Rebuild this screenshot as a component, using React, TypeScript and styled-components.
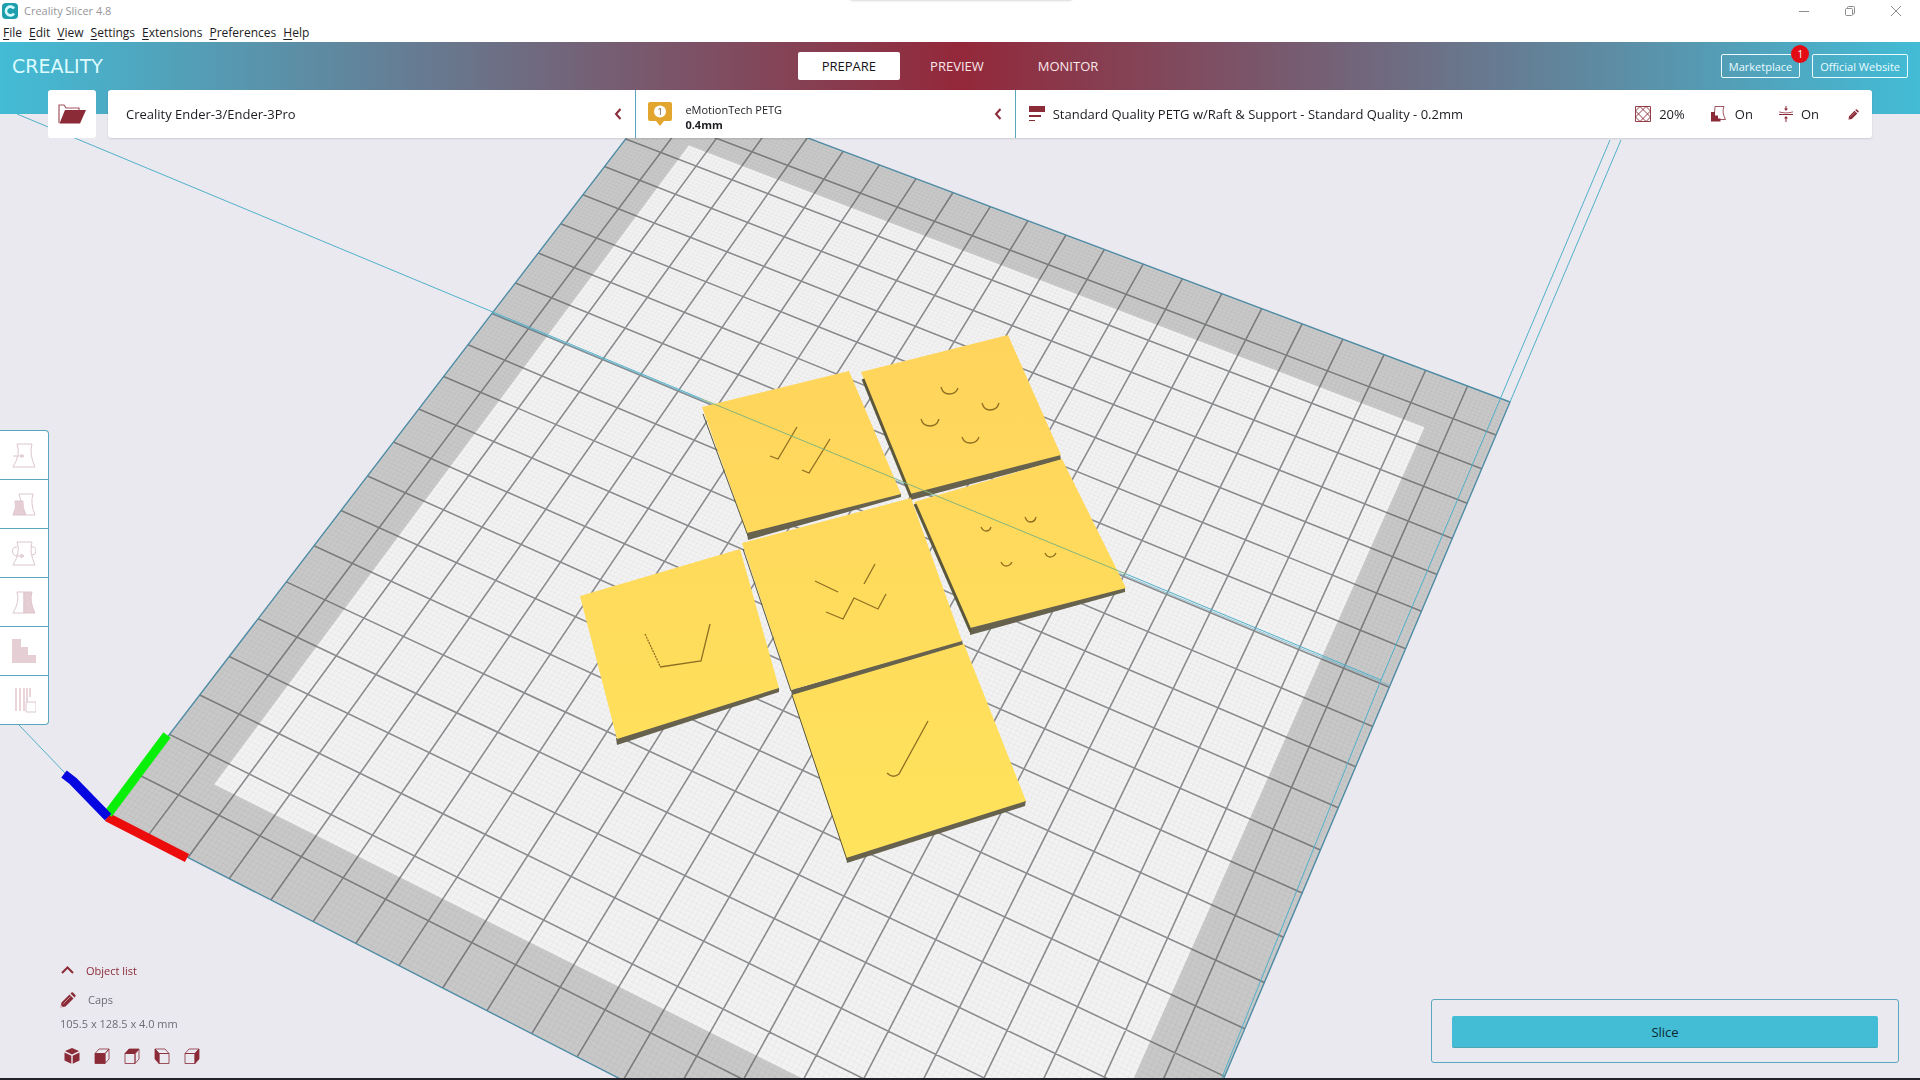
import React from "react";
import styled, { createGlobalStyle, css } from "styled-components";

const color = {
  accent: "#43bcd6",
  line: "#5aa6be",
  wine: "#8a2b37",
  text: "#1c1c22",
  muted: "#6c6c74",
  canvas: "#eae9f0",
  panel: "#ffffff",
};

const GlobalStyle = createGlobalStyle`
  *, *::before, *::after { box-sizing: border-box; }
  html, body { margin: 0; padding: 0; }
  body {
    font-family: "Open Sans", "Noto Sans", sans-serif;
    font-size: 13px;
    line-height: 16px;
    color: ${color.text};
    background: ${color.canvas};
  }
  button { font: inherit; color: inherit; margin: 0; padding: 0; border: 0; background: none; cursor: pointer; }
  svg { display: block; flex: none; }
`;

const Shell = styled.div`
  min-height: 100vh;
  display: flex;
  flex-direction: column;
  border-bottom: 2px solid #23222b;
`;

/* ---------- window chrome ---------- */

const WindowBar = styled.header`
  position: relative;
  height: 42px;
  background: #fff;
`;

const TitleRow = styled.div`
  display: flex;
  align-items: center;
  height: 22px;
  padding: 0 18px 0 2px;
  gap: 6px;
  font-size: 11px;
  color: #96969a;
`;

const Title = styled.span`
  flex: 1;
`;

const WindowControls = styled.div`
  display: flex;
  gap: 34px;
  color: #8d8d8d;
  button { width: 12px; height: 12px; }
`;

const TopGlow = styled.div`
  position: absolute;
  top: -4px;
  left: 50%;
  width: 222px;
  height: 4px;
  margin-left: -110px;
  border-radius: 4px;
  box-shadow: 0 0 3px rgba(0, 0, 0, 0.3);
`;

const MenuRow = styled.nav`
  display: flex;
  align-items: center;
  height: 20px;
  padding: 2px 3px 0;
  gap: 7px;
  font-size: 12px;
  line-height: 18px;
  u { text-underline-offset: 2px; }
`;

/* ---------- stage header ---------- */

const Stage = styled.header`
  display: grid;
  grid-template-columns: 1fr auto 1fr;
  align-items: start;
  height: 72px;
  padding: 10px 12px 0;
  background: linear-gradient(90deg, ${color.accent} 0%, #93283a 50%, ${color.accent} 100%);
`;

const Logo = styled.div`
  font-family: "DejaVu Sans", sans-serif;
  font-size: 19px;
  line-height: 28px;
  color: #dcfbff;
`;

const Tabs = styled.nav`
  display: flex;
  gap: 6px;
`;

const Tab = styled.button<{ $active?: boolean }>`
  height: 28px;
  padding: 0 24px;
  border-radius: 2px;
  font-size: 13px;
  color: #fbe6ea;
  ${(p) => p.$active && css`background: #fff; color: #14141c;`}
`;

const HeaderLinks = styled.div`
  display: flex;
  justify-content: flex-end;
  gap: 12px;
  padding-top: 2px;
`;

const HeaderLink = styled.a`
  position: relative;
  height: 24px;
  padding: 0 7px;
  border: 1px solid #e9fbff;
  border-radius: 2px;
  font-size: 11px;
  line-height: 24px;
  color: #e9fbff;
  text-decoration: none;
`;

const Badge = styled.span`
  position: absolute;
  top: -10px;
  right: -10px;
  width: 18px;
  height: 18px;
  border-radius: 50%;
  background: #e30c14;
  font-size: 10px;
  line-height: 18px;
  text-align: center;
`;

/* ---------- workspace ---------- */

const Workspace = styled.main`
  position: relative;
  flex: 1;
  display: flex;
  flex-direction: column;
`;

const Backdrop = styled.div`
  position: fixed;
  inset: 0;
  z-index: -1;
  svg { width: 100%; height: 100%; }
`;

const PanelRow = styled.div`
  display: flex;
  gap: 12px;
  margin: -24px 48px 0;
`;

const OpenButton = styled.button`
  display: grid;
  place-items: center;
  width: 48px;
  height: 48px;
  border-radius: 3px;
  background: ${color.panel};
`;

const Panel = styled.div`
  flex: 1;
  display: grid;
  grid-template-columns: 299fr 215fr 486fr;
  height: 48px;
  border-radius: 3px;
  background: ${color.panel};
  box-shadow: 0 1px 2px rgba(0, 0, 0, 0.12);
`;

const Section = styled.button<{ $indent: number }>`
  display: flex;
  align-items: center;
  min-width: 0;
  padding: 0 13px 0 ${(p) => p.$indent}px;
  text-align: left;
  white-space: nowrap;
  & + & { border-left: 1px solid ${color.line}; }
`;

const Grow = styled.span`
  flex: 1;
`;

const Material = styled.span`
  flex: 1;
  display: flex;
  flex-direction: column;
  padding: 6px 0 0 13px;
  font-size: 11px;
  line-height: 15px;
`;

const Profile = styled.span`
  flex: 1;
  padding-left: 8px;
`;

const Setting = styled.span<{ $after: number }>`
  display: flex;
  align-items: center;
  gap: 8px;
  margin-right: ${(p) => p.$after}px;
`;

const Tools = styled.div`
  align-self: flex-start;
  display: flex;
  flex-direction: column;
  margin-top: 292px;
  border: 1px solid ${color.line};
  border-left: 0;
  border-radius: 0 4px 4px 0;
  background: ${color.panel};
`;

const Tool = styled.button`
  display: grid;
  place-items: center;
  width: 48px;
  height: 49px;
  & + & { border-top: 1px solid ${color.line}; }
  &:first-child { height: 48px; }
`;

const Footer = styled.div`
  display: flex;
  justify-content: space-between;
  align-items: flex-end;
  margin-top: auto;
  padding: 0 21px 14px 60px;
`;

const ObjectInfo = styled.section`
  display: flex;
  flex-direction: column;
  align-items: flex-start;
  font-size: 11px;
  color: ${color.muted};
`;

const InfoButton = styled.button<{ $strong?: boolean }>`
  display: flex;
  align-items: center;
  height: 29px;
  gap: ${(p) => (p.$strong ? 11 : 12)}px;
  color: ${(p) => (p.$strong ? color.wine : color.muted)};
`;

const Dimensions = styled.p`
  margin: 0;
  line-height: 20px;
`;

const Views = styled.div`
  display: flex;
  gap: 14px;
  padding: 14px 0 0 4px;
`;

const SliceBox = styled.section`
  width: 468px;
  margin-bottom: 1px;
  padding: 16px 20px 14px;
  border: 1px solid ${color.line};
  border-radius: 3px;
`;

const SliceButton = styled.button`
  display: block;
  width: 100%;
  height: 32px;
  border-radius: 2px;
  border-bottom: 1px solid #4fa5b2;
  background: ${color.accent};
  color: #0d2833;
`;

/* ---------- build plate scene ---------- */

type Point = [number, number];

const CELLS = 22;
const INSET = 1.5;
// Plate corners on the canvas: front left, front right, back right, back left.
const plate: Point[] = [[107, 816], [1116, 1333], [1510, 402], [667, 85]];

const project = (() => {
  const [[x0, y0], [x1, y1], [x2, y2], [x3, y3]] = plate;
  const dx1 = x1 - x2, dx2 = x3 - x2, sx = x0 - x1 + x2 - x3;
  const dy1 = y1 - y2, dy2 = y3 - y2, sy = y0 - y1 + y2 - y3;
  const den = dx1 * dy2 - dx2 * dy1;
  const g = (sx * dy2 - dx2 * sy) / den;
  const h = (dx1 * sy - sx * dy1) / den;
  return (col: number, row: number): Point => {
    const u = col / CELLS, v = row / CELLS;
    const w = g * u + h * v + 1;
    return [
      ((x1 - x0 + g * x1) * u + (x3 - x0 + h * x3) * v + x0) / w,
      ((y1 - y0 + g * y1) * u + (y3 - y0 + h * y3) * v + y0) / w,
    ];
  };
})();

const at = (c: number, r: number) => project(c, r).map((n) => n.toFixed(2)).join(" ");

const gridPath = (step: number, skipMajor: boolean) => {
  const parts: string[] = [];
  const count = Math.round(CELLS / step);
  for (let i = 1; i < count; i++) {
    const k = i * step;
    if (skipMajor && i % 10 === 0) continue;
    parts.push(`M${at(k, 0)}L${at(k, CELLS)}M${at(0, k)}L${at(CELLS, k)}`);
  }
  return parts.join("");
};

const square = (a: number, b: number) => `M${at(a, a)}L${at(b, a)}L${at(b, b)}L${at(a, b)}Z`;

const outline = square(0, CELLS);
const printable = square(INSET, CELLS - INSET);
const major = gridPath(1, false);
const minor = gridPath(0.1, true);

// Each tile: top face, front side, and the width of its visible left side.
const tiles = [
  { top: "702,407 849,371 901,494 747,533", side: "747,532 901,493 901,497 748,540", left: "M703 414 L748 536", w: 1 },
  { top: "861,372 1008,335 1061,455 910,494", side: "910,493 1060,454 1061,460 911,500", left: "M863 379 L911 497", w: 3 },
  { top: "914,502 1062,459 1126,588 970,628", side: "970,627 1125,586 1125,592 970,635", left: "M915 504 L971 632", w: 3 },
  { top: "742,543 911,498 962,641 791,690", side: "791,690 962,640 963,645 792,696", left: "M743 549 L791 691", w: 1 },
  { top: "580,596 740,549 779,688 617,739", side: "616,738 779,687 779,692 617,745", left: "", w: 0 },
  { top: "792,695 964,644 1026,801 846,858", side: "846,857 1026,800 1025,806 847,863", left: "M792 695 L847 860", w: 1 },
];

const marks = [
  "M797 427 L778 459 L770 456",
  "M830 439 L809 473 L802 470",
  "M941 387 q2 7 8 7 q7 0 9 -6",
  "M982 403 q2 7 8 7 q7 0 9 -7",
  "M921 419 q2 7 9 7 q7 0 9 -7",
  "M962 437 q2 6 8 6 q7 0 9 -6",
  "M981 527 q2 4 5 4 q4 0 5 -4",
  "M1025 517 q2 5 5 5 q5 0 6 -5",
  "M1001 562 q2 4 5 4 q4 0 6 -4",
  "M1045 553 q2 4 5 4 q4 0 6 -4",
  "M815 581 L838 592",
  "M875 564 L864 584",
  "M826 612 L843 619 L854 598 L878 609 L886 594",
  "M660 667 L701 661 L710 624",
  "M928 721 L899 774 Q893 779 887 773",
];

const Scene = () => (
  <svg viewBox="0 0 1920 1080" preserveAspectRatio="xMidYMid slice" role="img" aria-label="Build plate with six tiles">
    <defs>
      <linearGradient id="tile" gradientUnits="userSpaceOnUse" x1="0" y1="335" x2="0" y2="860">
        <stop offset="0" stopColor="#ffd45c" />
        <stop offset="1" stopColor="#ffe35c" />
      </linearGradient>
    </defs>
    <rect width="1920" height="1080" fill={color.canvas} />
    <path d={outline} fill="#c8c8c8" />
    <path d={printable} fill="#f2f2f3" />
    <path d={minor} stroke="#000" strokeOpacity="0.03" fill="none" />
    <path d={major} stroke="#4c4d50" strokeOpacity="0.62" strokeWidth="1.6" fill="none" />
    <path d={outline} stroke="#4f8ca4" strokeWidth="1.4" fill="none" />
    <path d="M492 313 L1389 685" stroke="#52aac4" strokeOpacity="0.6" fill="none" />
    {tiles.map((t) => (
      <g key={t.top}>
        <polygon points={t.side} fill="#66624e" />
        <polygon points={t.top} fill="url(#tile)" />
        {t.w > 0 && <path d={t.left} stroke="#5c583c" strokeWidth={t.w} />}
      </g>
    ))}
    <g fill="none" stroke="#8f6f22" strokeWidth="1.3">
      {marks.map((d) => <path key={d} d={d} />)}
      <path d="M645 634 L660 666" strokeDasharray="2 1" />
    </g>
    <g fill="none" stroke="#52b0ca" strokeWidth="1">
      <path d="M17 114 L702 399 M1126 574 L1381 680 M1381 680 L1610 140 M1381 680 L1221 1080 M1510 402 L1621 140 M19 725 L65 773" />
      <path d="M702 399 L1126 574" stroke="#86b47c" />
    </g>
    <g fill="none" strokeWidth="9">
      <path d="M107 817 L187 858" stroke="#ec0c0c" />
      <path d="M108 814 L167 735" stroke="#08f008" />
      <path d="M108 817 L73 781 L64 774" stroke="#0606e0" strokeLinejoin="round" />
    </g>
  </svg>
);

/* ---------- icons ---------- */

const Chevron = ({ up = false }: { up?: boolean }) => (
  <svg width={up ? 15 : 8} height={up ? 10 : 12} viewBox={up ? "0 0 15 10" : "0 0 8 12"} fill="none" stroke={color.wine} strokeWidth="2">
    <path d={up ? "M2 7 L7.500 1.500 L13 7" : "M6.500 1 L2 6 L6.500 11"} />
  </svg>
);

const Pencil = ({ size }: { size: number }) => (
  <svg width={size} height={size} viewBox="0 0 16 16" fill={color.wine}>
    <path d="M0.500 15.500 L1.500 10.500 L9.500 2.500 L13.500 6.500 L5.500 14.500 Z M10.500 1.500 L11.500 0.600 Q12.300 0 13 0.600 L15.400 3 Q16 3.700 15.400 4.500 L14.500 5.500 Z" />
    <path d="M3.500 11.500 L10.500 4.500" stroke="#fff" strokeOpacity="0.6" strokeWidth="0.8" />
    <path d="M1 13 L3 15 L0.500 15.500 Z" fill="#fff" fillOpacity="0.7" />
  </svg>
);

const Folder = () => (
  <svg width="28" height="20" viewBox="0 0 28 20">
    <path d="M1 19 V1 H6 L8 4 H21 V7" fill="none" stroke={color.wine} strokeOpacity="0.8" strokeWidth="1.2" />
    <path d="M7 6 H28 L22 19.500 H1.500 Z" fill={color.wine} />
  </svg>
);

const vase = "M5 2 H20 Q17 12 23 25 H1 Q9 12 5 2 Z";

const toolIcons: { name: string; art: React.ReactNode }[] = [
  { name: "Move", art: <><path d={vase} /><path d="M1 14 H12 M9 12.500 L12 14 L9 15.500 Z" /></> },
  { name: "Scale", art: <><path d="M7 3 H21 Q18 12 23 24 H14 M7 3 L9 10" /><path d="M3 10 H11 Q10 16 14 24 H1 Q5 16 3 10 Z" fill="#e6cfd4" /></> },
  { name: "Rotate", art: <><path d={vase} /><path d="M5 7 Q0.500 7 0.500 11 Q0.500 16 6 16 H11 M9 14 L12 16 L9 18 Z M19 7 Q24 6 24 11 Q24 15 20 15" /></> },
  { name: "Mirror", art: <><path d="M5 3 H12 V24 H1 Q8 12 5 3 Z" /><path d="M12 3 H20 Q17 12 23 24 H12 Z" fill="#e6cfd4" /></> },
  { name: "Per model settings", art: <path d="M0 1 H9 V9 H16 V17 H24 V25 H0 Z" fill="#e6cfd4" stroke="none" /> },
  { name: "Support blocker", art: <><path d="M4 1 V24 M8 1 V24 M12 1 V24 M15 1 V15 M18 1 V10" strokeWidth="2" stroke="#ead6da" /><path d="M14 15 H24 V25 H14 Z" fill="#fff" /></> },
];

const cube = {
  top: "M5 1 H15 L11 5.500 H1 Z",
  side: "M15 1 V11 L11 15.500 V5.500 Z",
  front: "M1 5.500 H11 V15.500 H1 Z",
};

const viewIcons: { name: string; art: React.ReactNode }[] = [
  { name: "3D view", art: <path d="M8 0 L15 3 L8 6.500 L1 3 Z M0.500 4.500 L7.300 7.800 V15.800 L0.500 12.500 Z M15.500 4.500 L8.700 7.800 V15.800 L15.500 12.500 Z" fill={color.wine} stroke="none" /> },
  { name: "Front view", art: <><path d={cube.top} /><path d={cube.side} /><path d={cube.front} fill={color.wine} /></> },
  { name: "Top view", art: <><path d={cube.front} /><path d={cube.side} /><path d={cube.top} fill={color.wine} /></> },
  { name: "Left view", art: <><path d="M1 1 H11 L15 5.500 H5 Z M5 5.500 H15 V15.500 H5 Z" /><path d="M1 1 V11 L5 15.500 V5.500 Z" fill={color.wine} /></> },
  { name: "Right view", art: <><path d={cube.front} /><path d={cube.top} /><path d={cube.side} fill={color.wine} /></> },
];

const menus = ["File", "Edit", "View", "Settings", "Extensions", "Preferences", "Help"];

export default function App() {
  return (
    <Shell>
      <GlobalStyle />
      <Backdrop><Scene /></Backdrop>
      <WindowBar>
        <TopGlow />
        <TitleRow>
          <svg width="16" height="16" viewBox="0 0 16 16">
            <rect width="16" height="16" rx="4" fill="#1f9fae" />
            <path d="M12 5.500 A4.400 4.400 0 1 0 12 10.500" fill="none" stroke="#d7fbff" strokeWidth="2.600" />
          </svg>
          <Title>Creality Slicer 4.8</Title>
          <WindowControls>
            <button aria-label="Minimize"><svg width="12" height="12" stroke="currentColor"><path d="M1 6.500 H11" /></svg></button>
            <button aria-label="Restore"><svg width="12" height="12" fill="none" stroke="currentColor"><rect x="1.500" y="3.500" width="7" height="7" rx="1" /><path d="M3.500 3.500 V2.500 Q3.500 1.500 4.500 1.500 H9.500 Q10.500 1.500 10.500 2.500 V8 Q10.500 9 9 9" /></svg></button>
            <button aria-label="Close"><svg width="12" height="12" stroke="currentColor"><path d="M1 1 L11 11 M11 1 L1 11" /></svg></button>
          </WindowControls>
        </TitleRow>
        <MenuRow aria-label="Menu">
          {menus.map((m) => <button key={m}><u>{m[0]}</u>{m.slice(1)}</button>)}
        </MenuRow>
      </WindowBar>
      <Stage>
        <Logo>CREALITY</Logo>
        <Tabs aria-label="Stages">
          <Tab $active>PREPARE</Tab>
          <Tab>PREVIEW</Tab>
          <Tab>MONITOR</Tab>
        </Tabs>
        <HeaderLinks>
          <HeaderLink href="#marketplace">Marketplace<Badge>1</Badge></HeaderLink>
          <HeaderLink href="#website">Official Website</HeaderLink>
        </HeaderLinks>
      </Stage>
      <Workspace>
        <PanelRow>
          <OpenButton aria-label="Open file"><Folder /></OpenButton>
          <Panel>
            <Section $indent={18}>
              <Grow>Creality Ender-3/Ender-3Pro</Grow>
              <Chevron />
            </Section>
            <Section $indent={12}>
              <svg width="24" height="24" viewBox="0 0 24 24">
                <path d="M2 0 H22 Q24 0 24 2 V17 Q24 19 22 19 H16 L12 24 L8 19 H2 Q0 19 0 17 V2 Q0 0 2 0 Z" fill="#e2a52e" />
                <circle cx="12" cy="9.500" r="6" fill="#fff" />
                <text x="12" y="13" fontSize="9" textAnchor="middle" fill="#6b5520">1</text>
              </svg>
              <Material><span>eMotionTech PETG</span><b>0.4mm</b></Material>
              <Chevron />
            </Section>
            <Section $indent={13}>
              <svg width="16" height="16" viewBox="0 0 16 16" fill={color.wine}>
                <path d="M0 0 H16 V6 H0 Z M0 9 H12 V11 H0 Z M0 14 H6 V15 H0 Z" />
              </svg>
              <Profile>Standard Quality PETG w/Raft &amp; Support - Standard Quality - 0.2mm</Profile>
              <Setting $after={26}>
                <svg width="16" height="16" viewBox="0 0 16 16" fill="none" stroke={color.wine} strokeWidth="0.9">
                  <path d="M0.500 0.500 H15.500 V15.500 H0.500 Z M0.500 5 L5 0.500 M0.500 11 L11 0.500 M5 15.500 L15.500 5 M11 15.500 L15.500 11 M11 0.500 L15.500 5 M5 0.500 L15.500 11 M0.500 5 L11 15.500 M0.500 11 L5 15.500" />
                </svg>
                20%
              </Setting>
              <Setting $after={26}>
                <svg width="16" height="16" viewBox="0 0 16 16" fill="none" stroke={color.wine}>
                  <path d="M3.500 7 L4 0.500 H13 Q10.500 6 14.500 13.500 H9" strokeWidth="0.8" />
                  <path d="M0 6 H4 V9.500 H7 V12.500 H9.500 V15.500 H0 Z" fill={color.wine} stroke="none" />
                </svg>
                On
              </Setting>
              <Setting $after={29}>
                <svg width="14" height="16" viewBox="0 0 14 16" fill={color.wine}>
                  <path d="M6.500 0 H7.500 V2.500 H9 L7 5 L5 2.500 H6.500 Z M6.500 16 H7.500 V12.500 H9 L7 10 L5 12.500 H6.500 Z M0 8 H14 V9 H0 Z M0 5.500 L5 6.500 H9 L14 5.500 V6.300 L9 7.200 H5 L0 6.300 Z" />
                </svg>
                On
              </Setting>
              <Pencil size={11} />
            </Section>
          </Panel>
        </PanelRow>
        <Tools role="toolbar" aria-label="Model tools">
          {toolIcons.map((t) => (
            <Tool key={t.name} aria-label={t.name}>
              <svg width="24" height="26" viewBox="0 0 24 26" fill="none" stroke="#dcc6cc" strokeWidth="1">{t.art}</svg>
            </Tool>
          ))}
        </Tools>
        <Footer>
          <ObjectInfo>
            <InfoButton $strong><Chevron up />Object list</InfoButton>
            <InfoButton><Pencil size={16} />Caps</InfoButton>
            <Dimensions>105.5 x 128.5 x 4.0 mm</Dimensions>
            <Views>
              {viewIcons.map((v) => (
                <button key={v.name} aria-label={v.name}>
                  <svg width="16" height="16" viewBox="0 0 16 16" fill="none" stroke={color.wine} strokeWidth="0.8">{v.art}</svg>
                </button>
              ))}
            </Views>
          </ObjectInfo>
          <SliceBox><SliceButton>Slice</SliceButton></SliceBox>
        </Footer>
      </Workspace>
    </Shell>
  );
}
